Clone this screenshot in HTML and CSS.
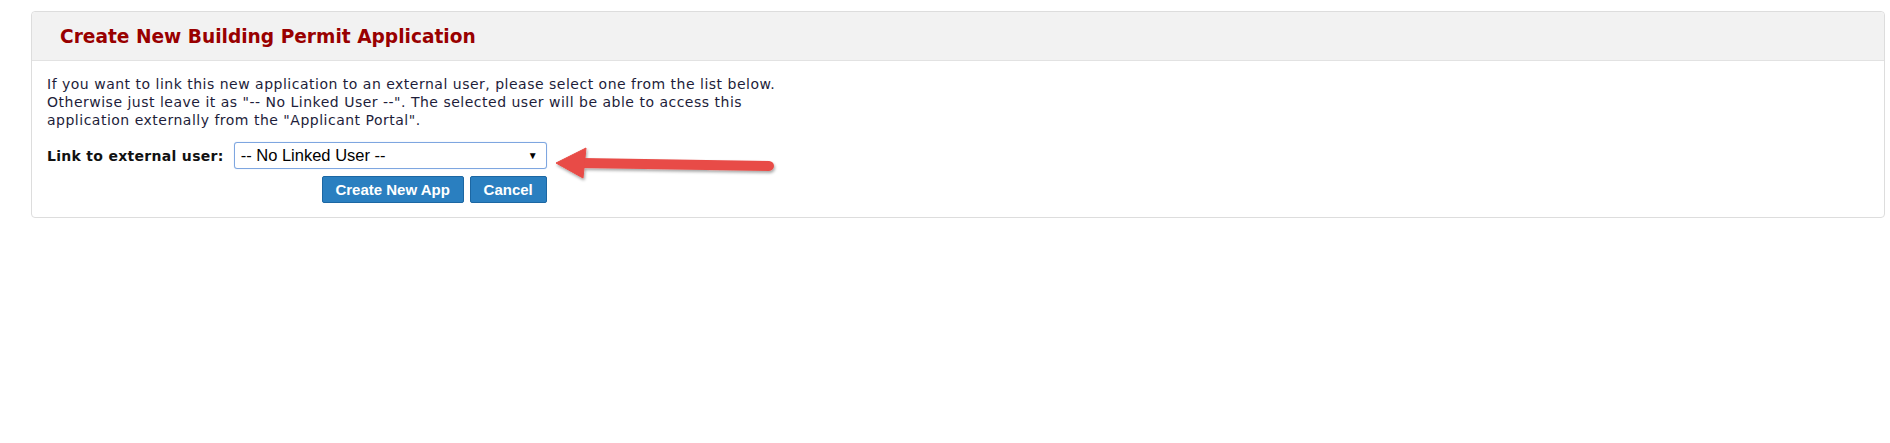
FILE: index.html
```html
<!DOCTYPE html>
<html>
<head>
<meta charset="utf-8">
<title>Create New Building Permit Application</title>
<link rel="stylesheet" href="styles.css">
</head>
<body>
<div class="page">
  <div class="panel">
    <div class="panel-header">
      <h1 class="panel-title">Create New Building Permit Application</h1>
    </div>
    <div class="panel-body">
      <p class="intro">If you want to link this new application to an external user, please select one from the list below.<br>Otherwise just leave it as "-- No Linked User --". The selected user will be able to access this<br>application externally from the "Applicant Portal".</p>
      <div class="form-grid">
        <label class="form-label">Link to external user:</label>
        <div class="select-box">
          <span class="select-text">-- No Linked User --</span>
          <span class="select-caret">&#9660;</span>
        </div>
        <div class="buttons">
          <button class="btn btn-create">Create New App</button>
          <button class="btn btn-cancel">Cancel</button>
        </div>
      </div>
    </div>
  </div>
  <svg class="callout-arrow" width="232" height="48" viewBox="0 0 232 48">
    <defs>
      <filter id="sh" x="-10%" y="-30%" width="120%" height="180%">
        <feDropShadow dx="1" dy="2" stdDeviation="1.5" flood-color="#000" flood-opacity="0.35"/>
      </filter>
    </defs>
    <g filter="url(#sh)" fill="#e84b46" stroke="#e84b46">
      <line x1="32" y1="23" x2="219" y2="26" stroke-width="10" stroke-linecap="round"/>
      <polygon points="6,23 36,8 33,38" stroke-width="1" stroke-linejoin="round"/>
    </g>
  </svg>
</div>
</body>
</html>
```

FILE: styles.css
```css
html, body {
  margin: 0;
  padding: 0;
  background: #ffffff;
}

.page {
  position: relative;
  padding: 11px 5px 0 31px;
}

.panel {
  border: 1px solid #dddddd;
  border-radius: 4px;
  background: #ffffff;
}

.panel-header {
  background: #f2f2f2;
  border-bottom: 1px solid #e2e2e2;
  border-radius: 4px 4px 0 0;
  height: 48px;
  display: flex;
  align-items: center;
  padding-left: 28px;
}

.panel-title {
  margin: 0;
  font-family: "DejaVu Sans", Verdana, sans-serif;
  font-weight: bold;
  font-size: 18.6px;
  color: #990000;
  padding-top: 1px;
}

.panel-body {
  padding: 14px 15px 14px 15px;
  font-family: "DejaVu Sans", Verdana, sans-serif;
  font-size: 14px;
  color: #1d1d3a;
}

.intro {
  margin: 0 0 13px 0;
  line-height: 18px;
  letter-spacing: 0.5px;
}

.form-grid {
  display: grid;
  grid-template-columns: max-content 313px;
  column-gap: 10px;
  row-gap: 7px;
  align-items: center;
}

.form-label {
  font-weight: bold;
  font-size: 14px;
  letter-spacing: 0.3px;
  color: #111111;
}

.select-box {
  height: 25px;
  border: 1px solid #7ea6e0;
  border-radius: 3px;
  box-shadow: 0 0 1px #a9c6ef;
  display: flex;
  align-items: center;
  justify-content: space-between;
  padding: 0 8px 0 6px;
  font-family: "Liberation Sans", Arial, sans-serif;
  font-size: 16.5px;
  color: #000000;
  background: #ffffff;
}

.select-caret {
  font-size: 10px;
  color: #000000;
}

.buttons {
  grid-column: 2;
  display: flex;
  justify-content: flex-end;
  gap: 6px;
}

.btn {
  height: 27px;
  background: #2a7fc0;
  border: 1px solid #1c67a3;
  border-radius: 2px;
  color: #ffffff;
  font-family: "Liberation Sans", Arial, sans-serif;
  font-weight: bold;
  font-size: 15px;
  padding: 0;
  cursor: pointer;
}

.btn-create {
  width: 142px;
}

.btn-cancel {
  width: 77px;
}

.callout-arrow {
  position: absolute;
  left: 550px;
  top: 140px;
}
```
